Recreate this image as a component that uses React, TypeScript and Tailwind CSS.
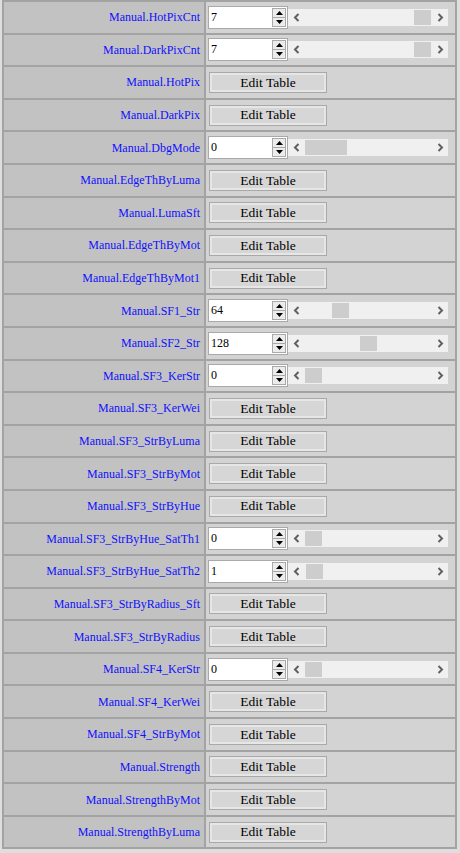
import React from 'react'

type Row =
  | { label: string; kind: 'table' }
  | { label: string; kind: 'num'; value: string; thumb: number; thumbW?: number }

const rows: Row[] = [
  { label: 'Manual.HotPixCnt', kind: 'num', value: '7', thumb: 109 },
  { label: 'Manual.DarkPixCnt', kind: 'num', value: '7', thumb: 109 },
  { label: 'Manual.HotPix', kind: 'table' },
  { label: 'Manual.DarkPix', kind: 'table' },
  { label: 'Manual.DbgMode', kind: 'num', value: '0', thumb: 0, thumbW: 42 },
  { label: 'Manual.EdgeThByLuma', kind: 'table' },
  { label: 'Manual.LumaSft', kind: 'table' },
  { label: 'Manual.EdgeThByMot', kind: 'table' },
  { label: 'Manual.EdgeThByMot1', kind: 'table' },
  { label: 'Manual.SF1_Str', kind: 'num', value: '64', thumb: 27 },
  { label: 'Manual.SF2_Str', kind: 'num', value: '128', thumb: 55 },
  { label: 'Manual.SF3_KerStr', kind: 'num', value: '0', thumb: 0 },
  { label: 'Manual.SF3_KerWei', kind: 'table' },
  { label: 'Manual.SF3_StrByLuma', kind: 'table' },
  { label: 'Manual.SF3_StrByMot', kind: 'table' },
  { label: 'Manual.SF3_StrByHue', kind: 'table' },
  { label: 'Manual.SF3_StrByHue_SatTh1', kind: 'num', value: '0', thumb: 0 },
  { label: 'Manual.SF3_StrByHue_SatTh2', kind: 'num', value: '1', thumb: 1 },
  { label: 'Manual.SF3_StrByRadius_Sft', kind: 'table' },
  { label: 'Manual.SF3_StrByRadius', kind: 'table' },
  { label: 'Manual.SF4_KerStr', kind: 'num', value: '0', thumb: 0 },
  { label: 'Manual.SF4_KerWei', kind: 'table' },
  { label: 'Manual.SF4_StrByMot', kind: 'table' },
  { label: 'Manual.Strength', kind: 'table' },
  { label: 'Manual.StrengthByMot', kind: 'table' },
  { label: 'Manual.StrengthByLuma', kind: 'table' },
]

function Chevron({ dir }: { dir: 'l' | 'r' }) {
  return (
    <svg width="8" height="9" viewBox="0 0 8 9">
      <path
        d={dir === 'l' ? 'M5.5 1 L2 4.5 L5.5 8' : 'M2.5 1 L6 4.5 L2.5 8'}
        fill="none"
        stroke="#606060"
        strokeWidth="2"
      />
    </svg>
  )
}

function Triangle({ up }: { up: boolean }) {
  return (
    <svg width="7" height="4" viewBox="0 0 7 4">
      <path d={up ? 'M0 4 L3.5 0 L7 4 Z' : 'M0 0 L3.5 4 L7 0 Z'} fill="#000" />
    </svg>
  )
}

function NumberField({ value, thumb, thumbW = 17 }: { value: string; thumb: number; thumbW?: number }) {
  return (
    <div className="flex items-center">
      {/* spin box */}
      <div className="flex h-[23px] w-[80px] items-stretch border border-[#a9a9a9] bg-white">
        <div className="flex-1 pl-[2px] pt-[2px] text-[12px] leading-[16px] text-black">{value}</div>
        <div className="my-[1px] mr-[1px] flex w-[14px] flex-col">
          <div className="flex flex-1 items-center justify-center border border-[#a9a9a9] bg-[#ececec]">
            <Triangle up />
          </div>
          <div className="flex flex-1 items-center justify-center border border-t-0 border-[#a9a9a9] bg-[#ececec]">
            <Triangle up={false} />
          </div>
        </div>
      </div>
      {/* scroll bar */}
      <div className="flex h-[17px] w-[160px] items-center bg-[#f0f0f0]">
        <div className="flex w-[17px] justify-center">
          <Chevron dir="l" />
        </div>
        <div className="flex h-full flex-1 items-center">
          <div className="h-[15px] bg-[#cdcdcd]" style={{ marginLeft: thumb, width: thumbW }} />
        </div>
        <div className="flex w-[17px] justify-center">
          <Chevron dir="r" />
        </div>
      </div>
    </div>
  )
}

function EditButton() {
  return (
    <div className="ml-[1px] h-[21px] w-[118px] border border-[#a9a9a9] bg-[#e6e6e6] p-[2px]">
      <div className="flex h-full items-center justify-center bg-[#d6d6d6] text-[13.5px] leading-none text-black">
        Edit Table
      </div>
    </div>
  )
}

export default function App() {
  return (
    <div className="min-h-[853px] w-[460px] bg-[#dedede] font-['Liberation_Serif',serif]">
      <div className="ml-[2px] w-[455px] border border-[#a3a3a3]">
        <div className="grid grid-cols-[202px_251px]">
          {rows.map((r) => (
            <React.Fragment key={r.label}>
              <div className="flex h-[32.6px] items-center justify-end border border-[#a3a3a3] bg-[#c2c2c2] pr-[4px] text-[12px] text-[#1010ff]">
                {r.label}
              </div>
              <div className="flex h-[32.6px] items-center border border-[#a3a3a3] bg-[#d3d3d3] pl-[2px]">
                {r.kind === 'num' ? (
                  <NumberField value={r.value} thumb={r.thumb} thumbW={r.thumbW} />
                ) : (
                  <EditButton />
                )}
              </div>
            </React.Fragment>
          ))}
        </div>
      </div>
    </div>
  )
}
